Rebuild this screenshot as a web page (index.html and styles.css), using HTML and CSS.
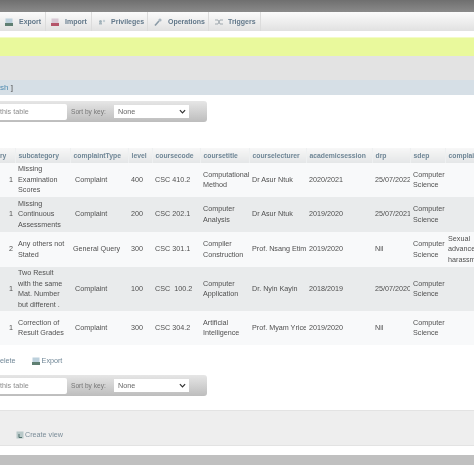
FILE: index.html
```html
<!DOCTYPE html>
<html lang="en">
<head>
<meta charset="utf-8">
<title>Table browse</title>
<link rel="stylesheet" href="styles.css">
</head>
<body>
<div class="page">
  <div class="topbar"></div>
  <nav class="tabs">
    <a class="tab tab-export"><svg class="ico" viewBox="0 0 8 8"><rect x="0.5" y="0.5" width="7" height="7" fill="#bcd0dc"/><rect x="0" y="5" width="8" height="3" fill="#5f7f72"/></svg>Export</a>
    <a class="tab tab-import"><svg class="ico" viewBox="0 0 8 8"><rect x="0.5" y="0.5" width="7" height="7" fill="#d8c8d4"/><rect x="0" y="5" width="8" height="3" fill="#b5556a"/></svg>Import</a>
    <a class="tab tab-priv"><svg class="ico" viewBox="0 0 8 8"><circle cx="2.5" cy="3.5" r="1.5" fill="#9fb0b8"/><circle cx="6" cy="3" r="1.2" fill="#c4ced3"/><rect x="1" y="5" width="3" height="1.5" fill="#a8b6bd"/></svg>Privileges</a>
    <a class="tab tab-ops"><svg class="ico" viewBox="0 0 8 8"><path d="M1 7.5 5 3" stroke="#8a9aa6" stroke-width="1.6" fill="none"/><circle cx="6" cy="2" r="1.6" fill="#a9b6bf"/></svg>Operations</a>
    <a class="tab tab-trig"><svg class="ico" viewBox="0 0 8 8"><path d="M0 2h3l2 4h3M0 6h3l2-4h3" stroke="#9aa4aa" stroke-width="0.9" fill="none"/></svg>Triggers</a>
  </nav>
  <div class="notice"></div>
  <div class="graystrip"></div>
  <div class="bluestrip"><span class="link">sh</span> ]</div>

  <div class="filter filter-top">
    <div class="search">this table</div>
    <span class="sortlabel">Sort by key:</span>
    <div class="select">None<svg class="chev" viewBox="0 0 8 5"><path d="M1 1l3 3 3-3" stroke="#333" stroke-width="1.4" fill="none"/></svg></div>
  </div>

  <div class="tablewrap">
    <table class="data">
      <colgroup>
        <col class="c0"><col class="c1"><col class="c2"><col class="c3"><col class="c4"><col class="c5"><col class="c6"><col class="c7"><col class="c8"><col class="c9"><col class="c10">
      </colgroup>
      <thead>
        <tr><th>category</th><th>subcategory</th><th>complaintType</th><th>level</th><th>coursecode</th><th>coursetitle</th><th>courselecturer</th><th>academicsession</th><th>drp</th><th>sdep</th><th>complaintDetails</th></tr>
      </thead>
      <tbody>
        <tr class="r1"><td class="num">1</td><td>Missing Examination Scores</td><td class="ind">Complaint</td><td>400</td><td>CSC 410.2</td><td>Computational Method</td><td class="nw">Dr Asur Ntuk</td><td>2020/2021</td><td class="nw">25/07/2022</td><td class="tight">Computer Science</td><td></td></tr>
        <tr class="r2"><td class="num">1</td><td>Missing Continuous Assessments</td><td class="ind">Complaint</td><td>200</td><td>CSC 202.1</td><td>Computer Analysis</td><td class="nw">Dr Asur Ntuk</td><td>2019/2020</td><td class="nw">25/07/2021</td><td class="tight">Computer Science</td><td></td></tr>
        <tr class="r3"><td class="num">2</td><td>Any others not Stated</td><td class="nw">General Query</td><td>300</td><td>CSC 301.1</td><td>Compiler Construction</td><td class="nw">Prof. Nsang Etim</td><td>2019/2020</td><td class="nw">Nil</td><td class="tight">Computer Science</td><td>Sexual advances harassment</td></tr>
        <tr class="r4"><td class="num">1</td><td>Two Result with the same Mat. Number but different .</td><td class="ind">Complaint</td><td>100</td><td>CSC&nbsp; 100.2</td><td>Computer Application</td><td class="nw">Dr. Nyin Kayin</td><td>2018/2019</td><td class="nw">25/07/2020</td><td class="tight">Computer Science</td><td></td></tr>
        <tr class="r5"><td class="num">1</td><td>Correction of Result Grades</td><td class="ind">Complaint</td><td>300</td><td>CSC 304.2</td><td>Artificial Intelligence</td><td class="nw">Prof. Myam Yrice</td><td>2019/2020</td><td class="nw">Nil</td><td class="tight">Computer Science</td><td></td></tr>
      </tbody>
    </table>
  </div>

  <div class="actions">
    <span class="action">elete</span>
    <span class="action action-export"><svg class="ico" viewBox="0 0 8 8"><rect x="0.5" y="0.5" width="7" height="7" fill="#bcd0dc"/><rect x="0" y="5" width="8" height="3" fill="#5f7f72"/></svg>Export</span>
  </div>

  <div class="filter filter-bottom">
    <div class="search">this table</div>
    <span class="sortlabel">Sort by key:</span>
    <div class="select">None<svg class="chev" viewBox="0 0 8 5"><path d="M1 1l3 3 3-3" stroke="#333" stroke-width="1.4" fill="none"/></svg></div>
  </div>

  <div class="footerpanel">
    <span class="createview"><svg class="ico" viewBox="0 0 8 8"><rect x="0.5" y="0.5" width="7" height="7" fill="#b8c8c8"/><path d="M3 3v3.5h3" stroke="#4f6f6a" stroke-width="1" fill="none"/></svg>Create view</span>
  </div>
  <div class="bottombar"></div>
</div>
</body>
</html>
```
FILE: styles.css
```css
html, body {
  margin: 0;
  padding: 0;
  background: #fff;
  overflow: hidden;
}
.page {
  width: 474px;
  height: 474px;
  overflow: hidden;
  font-family: "Liberation Sans", Arial, sans-serif;
  font-size: 7.2px;
  color: #505050;
  filter: blur(0.4px);
}
.topbar {
  height: 12px;
  background: linear-gradient(#6f6f6f, #8a8a8a);
}
.tabs {
  height: 19px;
  display: flex;
  background: linear-gradient(#fbfbfb, #e1e1e1);
  margin-bottom: 6px;
}
.tab {
  display: flex;
  align-items: center;
  gap: 6px;
  box-sizing: border-box;
  padding-left: 6px;
  border-right: 1px solid #dcdcdc;
  font-weight: bold;
  color: #62788a;
  font-size: 7px;
}
.tab-export { padding-left: 5px; width: 46px; }
.tab-import { padding-left: 5px; width: 46px; }
.tab-priv { width: 56px; gap: 5px; }
.tab-ops { width: 61px; }
.tab-trig { width: 52px; gap: 5px; }
.ico { width: 8px; height: 8px; flex: none; }
.notice {
  height: 19px;
  background: #e9f99c;
  border-top: 1px solid #f3fbc8;
  box-sizing: border-box;
}
.graystrip {
  height: 24px;
  background: #e3e3e3;
}
.bluestrip {
  height: 15px;
  line-height: 15px;
  background: #d6dfe6;
  margin-bottom: 6px;
  font-size: 8px;
}
.link { color: #4f8bb0; }
.filter {
  width: 207px;
  height: 21px;
  box-sizing: border-box;
  display: flex;
  align-items: center;
  background: linear-gradient(#e6e6e6, #bdbdbd);
  border-radius: 0 3px 3px 0;
}
.search {
  width: 67px;
  height: 16px;
  line-height: 16px;
  background: #fff;
  color: #8c8c8c;
  flex: none;
  border-radius: 0 2px 2px 0;
}
.sortlabel {
  margin-left: 4px;
  width: 43px;
  flex: none;
  color: #777;
  font-size: 6.6px;
}
.select {
  width: 75px;
  height: 13px;
  line-height: 13px;
  background: #fff;
  box-sizing: border-box;
  padding: 0 3px 0 4px;
  display: flex;
  justify-content: space-between;
  align-items: center;
  color: #666;
}
.chev { width: 7px; height: 5px; }
.tablewrap {
  margin-top: 26px;
  width: 474px;
  overflow: hidden;
}
.data {
  table-layout: fixed;
  border-collapse: collapse;
  width: 520px;
  margin-left: -30px;
  line-height: 10.5px;
}
.c0 { width: 45px; }
.c1 { width: 55px; }
.c2 { width: 58px; }
.c3 { width: 24px; }
.c4 { width: 48px; }
.c5 { width: 49px; }
.c6 { width: 57px; }
.c7 { width: 66px; }
.c8 { width: 38px; }
.c9 { width: 35px; }
.c10 { width: 45px; }
.data th {
  height: 15px;
  padding: 1px 3px 0;
  box-sizing: border-box;
  text-align: left;
  font-weight: bold;
  font-size: 6.8px;
  color: #6f8696;
  background: linear-gradient(#f7f7f7, #e4e6e7);
  white-space: nowrap;
  overflow: hidden;
  border-right: 1px solid #eef0f1;
}
.data th:first-child { padding-left: 8px; }
.data td {
  padding: 0 2px 0 3px;
  vertical-align: middle;
  overflow: hidden;
}
.data td.num { text-align: right; padding-right: 2px; }
.data td.ind { padding-left: 5px; }
.data td.nw { white-space: nowrap; padding-right: 0; }
.data td.tight { padding-right: 0; }
.r1 td, .r3 td, .r5 td { background: #f8f9fa; }
.r2 td, .r4 td { background: #e9ebec; }
.r1 { height: 34px; }
.r2 { height: 35px; }
.r3 { height: 35px; }
.r4 { height: 44px; }
.r5 { height: 34px; }
.actions {
  height: 30px;
  display: flex;
  align-items: center;
  gap: 16px;
  color: #6f8696;
  padding-top: 1px;
  box-sizing: border-box;
}
.action-export {
  display: flex;
  align-items: center;
  gap: 2px;
}
.filter-bottom { margin-bottom: 14px; }
.footerpanel {
  height: 36px;
  background: #eeeeee;
  border-top: 1px solid #e3e3e3;
  border-bottom: 1px solid #e3e3e3;
  box-sizing: border-box;
  padding: 19px 0 0 16px;
}
.createview {
  display: flex;
  align-items: center;
  gap: 1px;
  color: #7a8c98;
}
.bottombar {
  height: 10px;
  margin-top: 9px;
  background: #c0c0c0;
}
```
